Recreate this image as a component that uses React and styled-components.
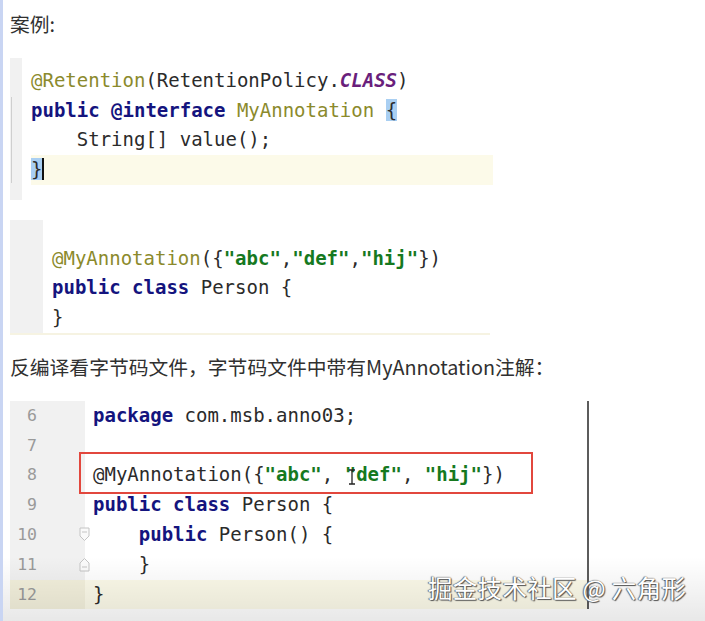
import React from "react";
import styled, { createGlobalStyle } from "styled-components";

const Global = createGlobalStyle`
  html, body {
    margin: 0;
    padding: 0;
    background: #ffffff;
  }
`;

const Page = styled.main`
  position: relative;
  width: 705px;
  height: 621px;
  overflow: hidden;
  box-sizing: border-box;
  border-left: 3px solid #c9d5f3;
  padding-left: 7px;
  background: #ffffff;
  font-family: "Noto Sans CJK SC", "Noto Sans", sans-serif;
  color: #333;

  &:after {
    content: "";
    position: absolute;
    left: 0;
    right: 0;
    bottom: 0;
    height: 64px;
    background: linear-gradient(rgba(0, 0, 0, 0), rgba(0, 0, 0, 0.09));
    pointer-events: none;
  }
`;

const Caption = styled.p`
  margin: ${(p) => p.$top}px 0 0;
  font-size: 19.8px;
  line-height: 26px;
  color: #303030;
`;

const Block = styled.section`
  display: grid;
  grid-template-columns: ${(p) => p.$gutter}px ${(p) => p.$width - p.$gutter}px;
  margin-top: ${(p) => p.$top}px;
  border-bottom: ${(p) => (p.$underline ? "2px solid #f6f3e2" : "none")};
  border-right: ${(p) => (p.$margin ? "2px solid #5c5c5c" : "none")};
  width: ${(p) => p.$width}px;
`;

const Gutter = styled.div`
  background: #f1f1f1;
  display: flex;
  flex-direction: column;
  padding: ${(p) => p.$pad || "0"};
`;

const GutterRule = styled.div`
  width: 1px;
  margin-left: 1px;
  flex: 1;
  background: #cfcfcf;
`;

const Code = styled.div`
  padding: ${(p) => p.$pad};
  font-family: "DejaVu Sans Mono", "Liberation Mono", monospace;
  font-size: 19px;
  color: #2b2b2b;
`;

const Line = styled.div`
  position: relative;
  height: ${(p) => p.$h || 29.7}px;
  line-height: ${(p) => p.$h || 29.7}px;
  white-space: pre;
  padding-left: ${(p) => p.$indent || 0}px;
  background: ${(p) => (p.$current ? "#fcfae9" : "transparent")};
`;

const NumLine = styled.div`
  display: grid;
  grid-template-columns: 27px 1fr;
  height: 29.8px;
  line-height: 29.8px;
  background: ${(p) => (p.$current ? "#f3f0dc" : "transparent")};
`;

const Num = styled.span`
  text-align: right;
  font-family: "DejaVu Sans Mono", "Liberation Mono", monospace;
  font-size: 16.5px;
  color: #9a9a9a;
`;

const Fold = styled.span`
  display: flex;
  justify-content: flex-end;
  align-items: center;
  margin-right: -5px;
`;

const Kw = styled.b`
  color: #14147e;
  font-weight: bold;
`;

const Ann = styled.span`
  color: #8b8a2c;
`;

const Str = styled.b`
  color: #16791f;
  font-weight: bold;
`;

const Const = styled.i`
  color: #6a1f7c;
  font-weight: bold;
`;

const Sel = styled.span`
  background: #a9cff2;
  border-right: ${(p) => (p.$caret ? "2px solid #111" : "none")};
`;

const Boxed = styled.span`
  position: relative;

  &:after {
    content: "";
    position: absolute;
    left: -14px;
    top: -11px;
    width: 454px;
    height: 42px;
    box-sizing: border-box;
    border: 2px solid #e2473d;
  }
`;

const Beam = styled.svg`
  position: absolute;
  left: 255px;
  top: 6px;
`;

const Watermark = styled.div`
  position: absolute;
  left: 425px;
  top: 571px;
  z-index: 2;
  font-family: "Noto Sans CJK SC", sans-serif;
  font-size: 24.5px;
  line-height: 34px;
  color: #ffffff;
  letter-spacing: 0.3px;
  text-shadow: 0 0 1px #444, 1px 1px 1px #555, -1px 0 1px #777;
`;

const FoldMark = ({ up }) => (
  <svg width="11" height="15" viewBox="0 0 11 15">
    <path
      d={up ? "M1 14 L1 6 L5.5 1.5 L10 6 L10 14 Z" : "M1 1 L10 1 L10 9 L5.5 13.5 L1 9 Z"}
      fill="#fafafa"
      stroke="#c4c4c4"
      strokeWidth="1"
    />
    <path d={up ? "M3 10 H8" : "M3 5 H8"} stroke="#c4c4c4" strokeWidth="1" />
  </svg>
);

const numbered = [
  { n: 6, code: <><Kw>package</Kw> com.msb.anno03;</> },
  { n: 7, code: "" },
  {
    n: 8,
    code: (
      <Boxed>
        @MyAnnotation({"{"}<Str>"abc"</Str>, <Str>"def"</Str>, <Str>"hij"</Str>{"})"}
        <Beam width="8" height="16" viewBox="0 0 8 16">
          <path d="M1 1 H7 M4 1 V15 M1 15 H7" stroke="#222" strokeWidth="1.3" fill="none" />
        </Beam>
      </Boxed>
    ),
  },
  { n: 9, code: <><Kw>public class</Kw> Person {"{"}</> },
  { n: 10, code: <>    <Kw>public</Kw> Person() {"{"}</>, fold: "down" },
  { n: 11, code: "    }", fold: "up" },
  { n: 12, code: "}", current: true },
];

export default function App() {
  return (
    <Page>
      <Global />
      <Caption $top={11}>案例:</Caption>

      <Block $gutter={12} $width={483} $top={21}>
        <Gutter $pad="39px 0 17px">
          <GutterRule />
        </Gutter>
        <Code $pad="8px 0 15px 9px">
          <Line>
            <Ann>@Retention</Ann>(RetentionPolicy.<Const>CLASS</Const>)
          </Line>
          <Line>
            <Kw>public @interface</Kw> <Ann>MyAnnotation</Ann> <Sel>{"{"}</Sel>
          </Line>
          <Line>{"    String[] value();"}</Line>
          <Line $current>
            <Sel $caret>{"}"}</Sel>
          </Line>
        </Code>
      </Block>

      <Block $gutter={33} $width={480} $top={20} $underline>
        <Gutter />
        <Code $pad="24px 0 0 9px">
          <Line>
            <Ann>@MyAnnotation</Ann>({"{"}<Str>"abc"</Str>,<Str>"def"</Str>,<Str>"hij"</Str>{"})"}
          </Line>
          <Line>
            <Kw>public class</Kw> Person {"{"}
          </Line>
          <Line>{"}"}</Line>
        </Code>
      </Block>

      <Caption $top={19}>反编译看字节码文件，字节码文件中带有MyAnnotation注解：</Caption>

      <Block $gutter={75} $width={577} $top={21} $margin>
        <Gutter>
          {numbered.map((l) => (
            <NumLine key={l.n} $current={l.current}>
              <Num>{l.n}</Num>
              <Fold>{l.fold && <FoldMark up={l.fold === "up"} />}</Fold>
            </NumLine>
          ))}
        </Gutter>
        <Code $pad="0">
          {numbered.map((l) => (
            <Line key={l.n} $h={29.8} $indent={8} $current={l.current}>
              {l.code}
            </Line>
          ))}
        </Code>
      </Block>

      <Watermark>掘金技术社区 @ 六角形</Watermark>
    </Page>
  );
}
